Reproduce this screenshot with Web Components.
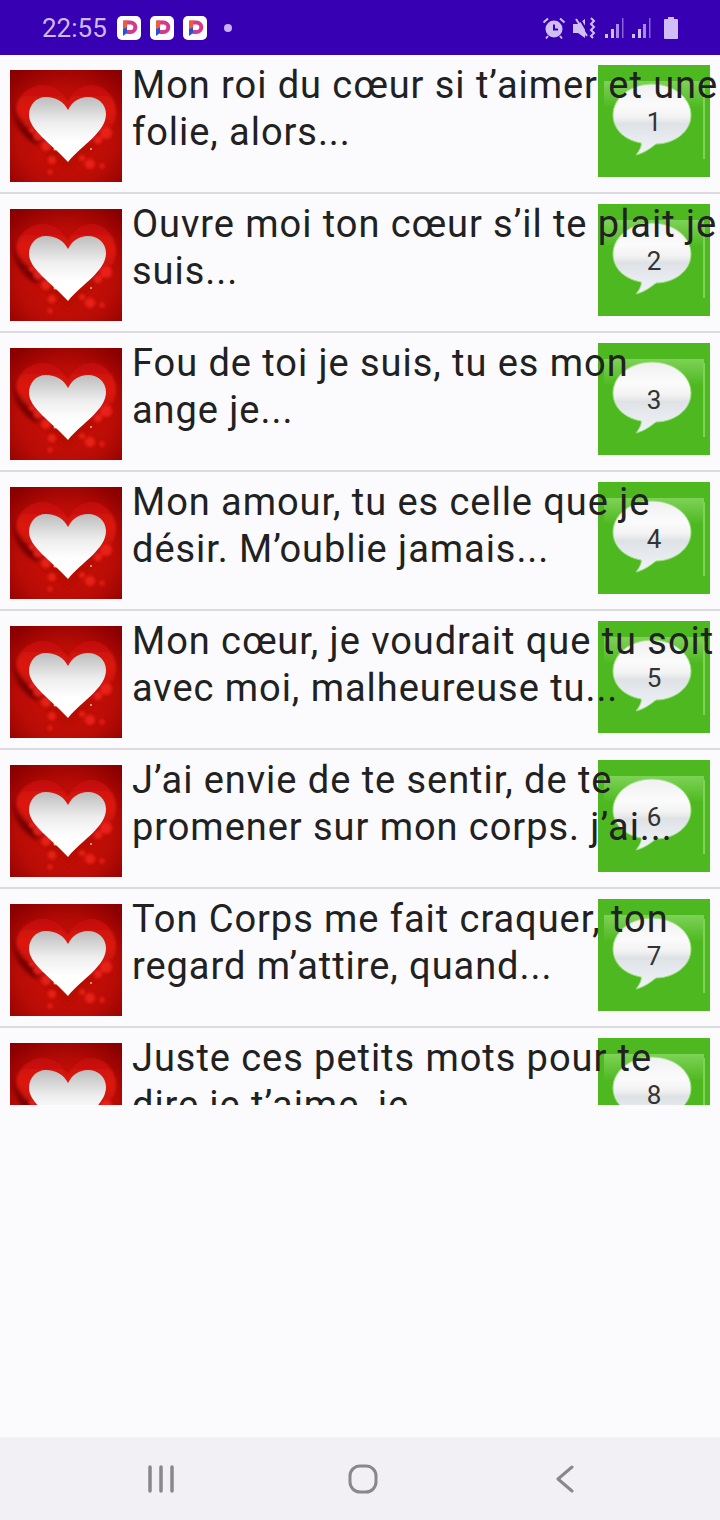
<!DOCTYPE html>
<html lang="fr">
<head>
<meta charset="utf-8">
<title>Messages</title>
<style>
  html, body { margin: 0; height: 100%; background: #fbfafd; }
  body { display: flex; flex-direction: column; height: 1520px; overflow: hidden; font-family: Roboto, sans-serif; }
</style>
</head>
<body>
<status-bar></status-bar>
<message-list>
  <message-row number="1">Mon roi du cœur si t’aimer et une folie, alors...</message-row>
  <message-row number="2">Ouvre moi ton cœur s’il te plait je suis...</message-row>
  <message-row number="3">Fou de toi je suis, tu es mon ange je...</message-row>
  <message-row number="4">Mon amour, tu es celle que je désir. M’oublie jamais...</message-row>
  <message-row number="5">Mon cœur, je voudrait que tu soit avec moi, malheureuse tu...</message-row>
  <message-row number="6">J’ai envie de te sentir, de te promener sur mon corps. j’ai...</message-row>
  <message-row number="7">Ton Corps me fait craquer, ton regard m’attire, quand...</message-row>
  <message-row number="8">Juste ces petits mots pour te dire je t’aime, je...</message-row>
</message-list>
<nav-bar></nav-bar>

<script>
// small logo used three times in the status bar
const appBadge = `
  <svg width="24" height="24" viewBox="0 0 24 24">
    <rect width="24" height="24" rx="5" fill="#fff"/>
    <path d="M7 4.500h6.500a6.800 6.800 0 0 1 0 13.600H9.500v-4h4a2.800 2.800 0 0 0 0-5.600H7z" fill="#d43a8e"/>
    <path d="M6 4.500h4.500L10 12l-4 1.500z" fill="#ee5a44"/>
    <path d="M6 13l4-1.500V17l-4 3z" fill="#2750dc"/>
  </svg>`;

class StatusBar extends HTMLElement {
  constructor() {
    super();
    this.attachShadow({ mode: "open" });
    this.shadowRoot.innerHTML = `
      <style>
        :host {
          display: flex;
          align-items: center;
          flex: none;
          height: 55px;
          padding: 0 42px;
          box-sizing: border-box;
          background: #3700b3;
          color: #cfb9f6;
          font: 400 26px Roboto, sans-serif;
        }
        .time { width: 75px; }
        .badges { display: flex; gap: 9px; }
        .badges svg { display: block; }
        .dot { width: 8px; height: 8px; margin-left: 17px; border-radius: 50%; background: #c9adf5; }
        .right { display: flex; align-items: center; margin-left: auto; }
        .right svg { display: block; }
      </style>
      <span class="time">22:55</span>
      <div class="badges">${appBadge}${appBadge}${appBadge}</div>
      <span class="dot"></span>
      <div class="right">
        <svg width="24" height="24" viewBox="0 0 24 24" style="margin-right:6px">
          <circle cx="12" cy="13" r="8.500" fill="#d2bef7"/>
          <path d="M12 8.500v5h4" fill="none" stroke="#3700b3" stroke-width="2"/>
          <path d="M1.500 6.500L6 2.500M22.500 6.500L18 2.500M6 20l-2 2.500M18 20l2 2.500" stroke="#d2bef7" stroke-width="2" fill="none"/>
        </svg>
        <svg width="24" height="24" viewBox="0 0 24 24" style="margin-right:8px">
          <path d="M1 8h5l7-5v19l-7-5H1z" fill="#d2bef7"/>
          <path d="M4 3l11 17" stroke="#d2bef7" stroke-width="2"/>
          <path d="M7 1.500l10 17" stroke="#3700b3" stroke-width="2"/>
          <path d="M19 2l3 3-3 3 3 3-3 3 3 3-3 3 2 2" fill="none" stroke="#d2bef7" stroke-width="2"/>
        </svg>
        <svg width="20" height="24" viewBox="0 0 20 24" style="margin-right:7px">
          <path d="M1 18h3v4H1zM7 13h3v9H7z" fill="#d2bef7"/>
          <path d="M12 8h3v14h-3z" fill="#a98ae8"/>
          <path d="M18 2h1.500v20H18z" fill="#8a63d8"/>
        </svg>
        <svg width="20" height="24" viewBox="0 0 20 24" style="margin-right:13px">
          <path d="M1 18h3v4H1zM7 13h3v9H7z" fill="#d2bef7"/>
          <path d="M12 8h3v14h-3z" fill="#a98ae8"/>
          <path d="M18 2h1.500v20H18z" fill="#8a63d8"/>
        </svg>
        <svg width="14" height="22" viewBox="0 0 14 22">
          <path d="M4 0h6v2h3a1 1 0 0 1 1 1v18a1 1 0 0 1-1 1H1a1 1 0 0 1-1-1V3a1 1 0 0 1 1-1h3z" fill="#d2bef7"/>
        </svg>
      </div>
    `;
  }
}
customElements.define("status-bar", StatusBar);

class MessageList extends HTMLElement {
  constructor() {
    super();
    this.attachShadow({ mode: "open" });
    this.shadowRoot.innerHTML = `
      <style>
        :host { display: block; flex: none; height: 1050px; overflow: hidden; }
      </style>
      <slot></slot>
    `;
  }
}
customElements.define("message-list", MessageList);

const heartArt = `
  <svg width="112" height="112" viewBox="0 0 112 112">
    <defs>
      <radialGradient id="bg" cx="50%" cy="60%" r="72%">
        <stop offset="0" stop-color="#d01008"/>
        <stop offset=".6" stop-color="#b90c06"/>
        <stop offset="1" stop-color="#8a0000"/>
      </radialGradient>
      <linearGradient id="lobe" x1="0" y1="0" x2="0" y2="1">
        <stop offset="0" stop-color="#c00d07"/>
        <stop offset=".28" stop-color="#de160c"/>
        <stop offset=".7" stop-color="#b80c06"/>
      </linearGradient>
      <linearGradient id="white" x1="0" y1="0" x2="0" y2="1">
        <stop offset="0" stop-color="#bdbdbd"/>
        <stop offset=".4" stop-color="#eeeeee"/>
        <stop offset=".7" stop-color="#fff"/>
      </linearGradient>
      <filter id="soft"><feGaussianBlur stdDeviation="2"/></filter>
      <filter id="edge"><feGaussianBlur stdDeviation=".6"/></filter>
      <filter id="glow"><feGaussianBlur stdDeviation="1.600"/></filter>
    </defs>
    <rect width="112" height="112" fill="url(#bg)"/>
    <path d="M58 32C52 20 42 14 30 15C15 17 5 30 6 44C7 62 36 84 58 102C78 84 106 62 106 42C106 28 96 17 84 15C72 14 63 21 58 32Z" fill="url(#lobe)" filter="url(#glow)"/>
    <path d="M4 28C2 44 14 58 32 70L26 74C10 66 0 48 4 28Z" fill="#6e0000" filter="url(#soft)"/>
    <g filter="url(#glow)" fill="#f2281c" opacity=".8">
      <circle cx="28" cy="66" r="5"/><circle cx="36" cy="76" r="5"/><circle cx="22" cy="60" r="3"/>
      <circle cx="96" cy="63" r="6"/><circle cx="88" cy="70" r="4"/><circle cx="80" cy="94" r="5"/>
      <circle cx="42" cy="90" r="4"/><circle cx="92" cy="96" r="2.500"/><circle cx="40" cy="102" r="2.500"/><circle cx="72" cy="88" r="3"/>
    </g>
    <g fill="#f8b0a0">
      <circle cx="45" cy="79" r="1.500"/><circle cx="80" cy="69" r="1"/><circle cx="81" cy="79" r="1"/>
    </g>
    <path d="M58 40C54 32 46 27 36 27C26 27 19 35 19 45C19 60 42 74 58 92C72 75 96 62 96 44C96 34 88 27 78 27C69 27 62 32 58 40Z" fill="url(#white)" filter="url(#edge)"/>
  </svg>`;

const bubbleArt = `
  <svg width="112" height="112" viewBox="0 0 112 112">
    <defs>
      <linearGradient id="bub" x1="0" y1="0" x2="0" y2="1">
        <stop offset="0" stop-color="#f0f0f0"/>
        <stop offset=".3" stop-color="#fbfbfb"/>
        <stop offset=".46" stop-color="#f3f3f3"/>
        <stop offset=".56" stop-color="#dfe2e5"/>
        <stop offset="1" stop-color="#f0f4fa"/>
      </linearGradient>
      <linearGradient id="top" x1="0" y1="0" x2="0" y2="1">
        <stop offset="0" stop-color="#7ed256"/>
        <stop offset="1" stop-color="#4fb923"/>
      </linearGradient>
      <filter id="edge2"><feGaussianBlur stdDeviation=".5"/></filter>
    </defs>
    <rect width="112" height="112" fill="#4db81f"/>
    <rect x="6" y="16" width="100" height="26" fill="url(#top)" filter="url(#edge2)"/>
    <rect x="105" y="20" width="2" height="74" fill="#7fd25a" filter="url(#edge2)"/>
    <path d="M54 19C76 19 93 33 93 50C93 67 76 79 58 79C54 82 47 88 38 90C42 85 44 80 43 78C26 75 15 64 15 50C15 33 32 19 54 19Z" fill="url(#bub)" stroke="#9adf7c" stroke-width="1" filter="url(#edge2)"/>
  </svg>`;

class MessageRow extends HTMLElement {
  constructor() {
    super();
    this.attachShadow({ mode: "open" });
    this.shadowRoot.innerHTML = `
      <style>
        :host {
          display: flex;
          position: relative;
          height: 139px;
          box-sizing: border-box;
          border-bottom: 2px solid #dcdbdf;
          padding-left: 10px;
        }
        .heart { flex: none; margin-top: 15px; }
        .heart svg, .icon svg { display: block; }
        .text {
          position: relative;
          z-index: 1;
          width: 588px;
          margin: 7px 0 0 10px;
          font: 400 38px/47px Roboto, sans-serif;
          letter-spacing: .95px;
          color: #212121;
        }
        /* green icon sits under the text, text runs over it */
        .icon { position: absolute; top: 10px; right: 10px; width: 112px; height: 112px; }
        .num {
          position: absolute;
          left: 0; right: 0; top: 41px;
          text-align: center;
          font: 400 26px/32px Roboto, sans-serif;
          color: #333;
        }
      </style>
      <div class="heart">${heartArt}</div>
      <div class="text"><slot></slot></div>
      <div class="icon">${bubbleArt}<span class="num">${this.getAttribute("number")}</span></div>
    `;
  }
}
customElements.define("message-row", MessageRow);

class NavBar extends HTMLElement {
  constructor() {
    super();
    this.attachShadow({ mode: "open" });
    this.shadowRoot.innerHTML = `
      <style>
        :host {
          display: grid;
          grid-template-columns: repeat(3, 202px);
          align-items: center;
          justify-items: center;
          margin-top: auto;
          flex: none;
          height: 83px;
          padding-left: 60px;
          background: #f2f0f4;
        }
        svg { display: block; fill: none; stroke: #88888c; stroke-linecap: round; stroke-linejoin: round; }
      </style>
      <svg width="26" height="28" viewBox="0 0 26 28" stroke-width="3.500">
        <path d="M2 2v24M13 2v24M24 2v24"/>
      </svg>
      <svg width="30" height="30" viewBox="0 0 30 30" stroke-width="3">
        <rect x="2" y="2" width="26" height="26" rx="10"/>
      </svg>
      <svg width="18" height="28" viewBox="0 0 18 28" stroke-width="3">
        <path d="M16 2L2 14l14 12"/>
      </svg>
    `;
  }
}
customElements.define("nav-bar", NavBar);
</script>
</body>
</html>
